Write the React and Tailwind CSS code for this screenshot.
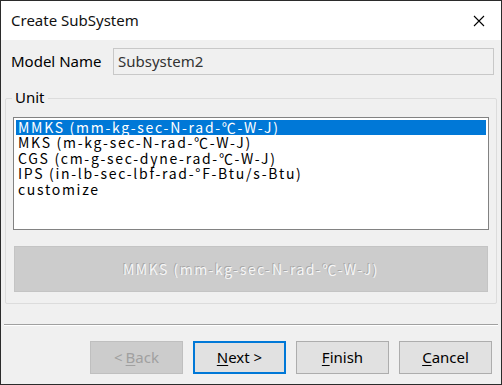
import React from "react";

const items = [
  "MMKS (mm-kg-sec-N-rad-℃-W-J)",
  "MKS (m-kg-sec-N-rad-℃-W-J)",
  "CGS (cm-g-sec-dyne-rad-℃-W-J)",
  "IPS (in-lb-sec-lbf-rad-°F-Btu/s-Btu)",
  "customize",
];

function Btn({ children, variant }) {
  const base =
    "w-[93px] h-[33px] flex items-center justify-center text-[15px] leading-none";
  if (variant === "disabled")
    return (
      <div className={base + " bg-[#cccccc] border border-[#bfbfbf] text-[#a0a0a0]"}>
        {children}
      </div>
    );
  if (variant === "default")
    return (
      <div className={base + " bg-[#e1e1e1] border-2 border-[#0078d7] text-black"}>
        {children}
      </div>
    );
  return (
    <div className={base + " bg-[#e1e1e1] border border-[#adadad] text-black"}>
      {children}
    </div>
  );
}

export default function App() {
  return (
    <div
      className="w-[502px] h-[385px] border border-[#2b2b2b] bg-[#f0f0f0] flex flex-col overflow-hidden"
      style={{ fontFamily: '"Noto Sans", "Noto Sans CJK KR", sans-serif' }}
    >
      <div className="h-[39px] bg-white flex items-center justify-between pl-[10px] pr-[14px] shrink-0">
        <span className="text-[15px] text-[#111]">Create SubSystem</span>
        <svg width="12" height="12" viewBox="0 0 12 12" className="mr-[2px]">
          <path d="M1 1 L11 11 M11 1 L1 11" stroke="#000" strokeWidth="1.1" />
        </svg>
      </div>
      <div className="flex items-center pl-[10px] pr-[7px] mt-[8px] h-[27px]">
        <span className="text-[15px] text-black w-[102px]">Model Name</span>
        <div className="flex-1 h-[27px] border border-[#c8c8c8] bg-[#f0f0f0] flex items-center pl-[4px] text-[15px] text-[#333]">
          Subsystem2
        </div>
      </div>
      <div className="relative mx-[4px] mt-[23px] h-[206px] border border-[#dcdcdc] rounded-[2px]">
        <span className="absolute -top-[12px] left-[6px] px-[3px] bg-[#f0f0f0] text-[15px] leading-[20px] text-black">
          Unit
        </span>
        <div className="mx-[7px] mt-[18px] h-[113px] border border-[#828282] bg-white p-[2px]">
          {items.map((t, i) => (
            <div
              key={i}
              className={
                "h-[15.4px] leading-[15px] pl-[2px] text-[14px] tracking-[1.7px] whitespace-nowrap " +
                (i === 0 ? "bg-[#0078d7] text-white" : "text-black")
              }
              style={{ fontFamily: '"Noto Sans CJK KR", sans-serif' }}
            >
              {t}
            </div>
          ))}
        </div>
        <div
          className="mx-[8px] mt-[16px] h-[46px] bg-[#cccccc] border border-[#c4c4c4] flex items-center justify-center text-[14px] tracking-[1.5px] text-[#f6f6f6]"
          style={{ textShadow: "-1px -1px 0 #a8a8a8", fontFamily: '"Noto Sans CJK KR", sans-serif' }}
        >
          MMKS (mm-kg-sec-N-rad-℃-W-J)
        </div>
      </div>
      <div className="mx-[3px] mt-[20px] h-[2px] border-t border-[#a0a0a0] border-b border-b-white" />
      <div className="flex justify-end gap-[10px] pr-[9px] mt-[15px]">
        <Btn variant="disabled">
          &lt; <span className="underline underline-offset-2 ml-[3px]">B</span>ack
        </Btn>
        <Btn variant="default">
          <span className="underline underline-offset-2">N</span>ext &gt;
        </Btn>
        <Btn>
          <span className="underline underline-offset-2">F</span>inish
        </Btn>
        <Btn>
          <span className="underline underline-offset-2">C</span>ancel
        </Btn>
      </div>
    </div>
  );
}
